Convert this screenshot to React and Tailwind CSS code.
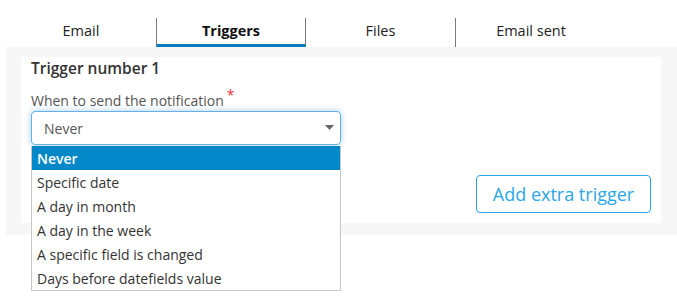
import React from "react";

const items = [
  "Never",
  "Specific date",
  "A day in month",
  "A day in the week",
  "A specific field is changed",
  "Days before datefields value",
];

export default function App() {
  return (
    <div className="w-[677px] h-[299px] bg-white font-['Open_Sans',sans-serif] relative overflow-hidden">
      <div className="pt-[18px] pl-[6px] flex">
        <div className="w-[150px] h-[29px] pt-[3px] text-center text-[14.5px] leading-5 text-[#222]">Email</div>
        <div className="w-[150px] h-[29px] pt-[3px] text-center text-[14.5px] leading-5 font-bold text-[#111] border-l border-r border-[#7a7a7a] border-b-[3px] border-b-[#0a7bbd]">Triggers</div>
        <div className="w-[150px] h-[29px] pt-[3px] text-center text-[14.5px] leading-5 text-[#222] border-r border-[#7a7a7a]">Files</div>
        <div className="w-[150px] h-[29px] pt-[3px] text-center text-[14.5px] leading-5 text-[#222]">Email sent</div>
      </div>
      <div className="ml-[6px] bg-[#f7f7f7] pt-[10px] pl-[15px] pr-[16px] pb-[12px]">
        <div className="bg-white px-[10px] pb-[10px] flex flex-col">
          <div className="text-[15.5px] leading-[22px] font-semibold text-[#333]">Trigger number 1</div>
          <div className="mt-[13px] text-[14px] leading-[18px] text-[#555]">
            When to send the notification
            <span className="relative -top-[6px] ml-[3px] text-[#ee3344] text-[14px]">*</span>
          </div>
          <div className="mt-[1px] relative w-[310px]">
            <div className="h-[34px] rounded-[4px] border border-[#66afe9] shadow-[0_0_6px_rgba(102,175,233,0.6)] flex items-center pl-[12px] text-[14px] text-[#555]">
              Never
              <svg className="absolute right-[7px] top-[14px]" width="9" height="5" viewBox="0 0 9 5">
                <path d="M0 0 L9 0 L4.5 5 Z" fill="#666" />
              </svg>
            </div>
            <div className="absolute left-0 top-[35px] w-[310px] bg-white border-x border-b border-[#c8c8c8] z-10">
              {items.map((t, i) => (
                <div
                  key={t}
                  className={
                    i === 0
                      ? "h-[24px] pl-[5px] flex items-center text-[14px] bg-[#0288c9] text-white font-semibold"
                      : "h-[24px] pl-[5px] flex items-center text-[14px] text-[#333]"
                  }
                >
                  {t}
                </div>
              ))}
            </div>
          </div>
          <div className="mt-[30px] flex justify-end">
            <button className="h-[38px] w-[175px] rounded-[4px] border border-[#2aa7e6] text-[#2aa7e6] text-[18px] bg-white">
              Add extra trigger
            </button>
          </div>
        </div>
      </div>
    </div>
  );
}
